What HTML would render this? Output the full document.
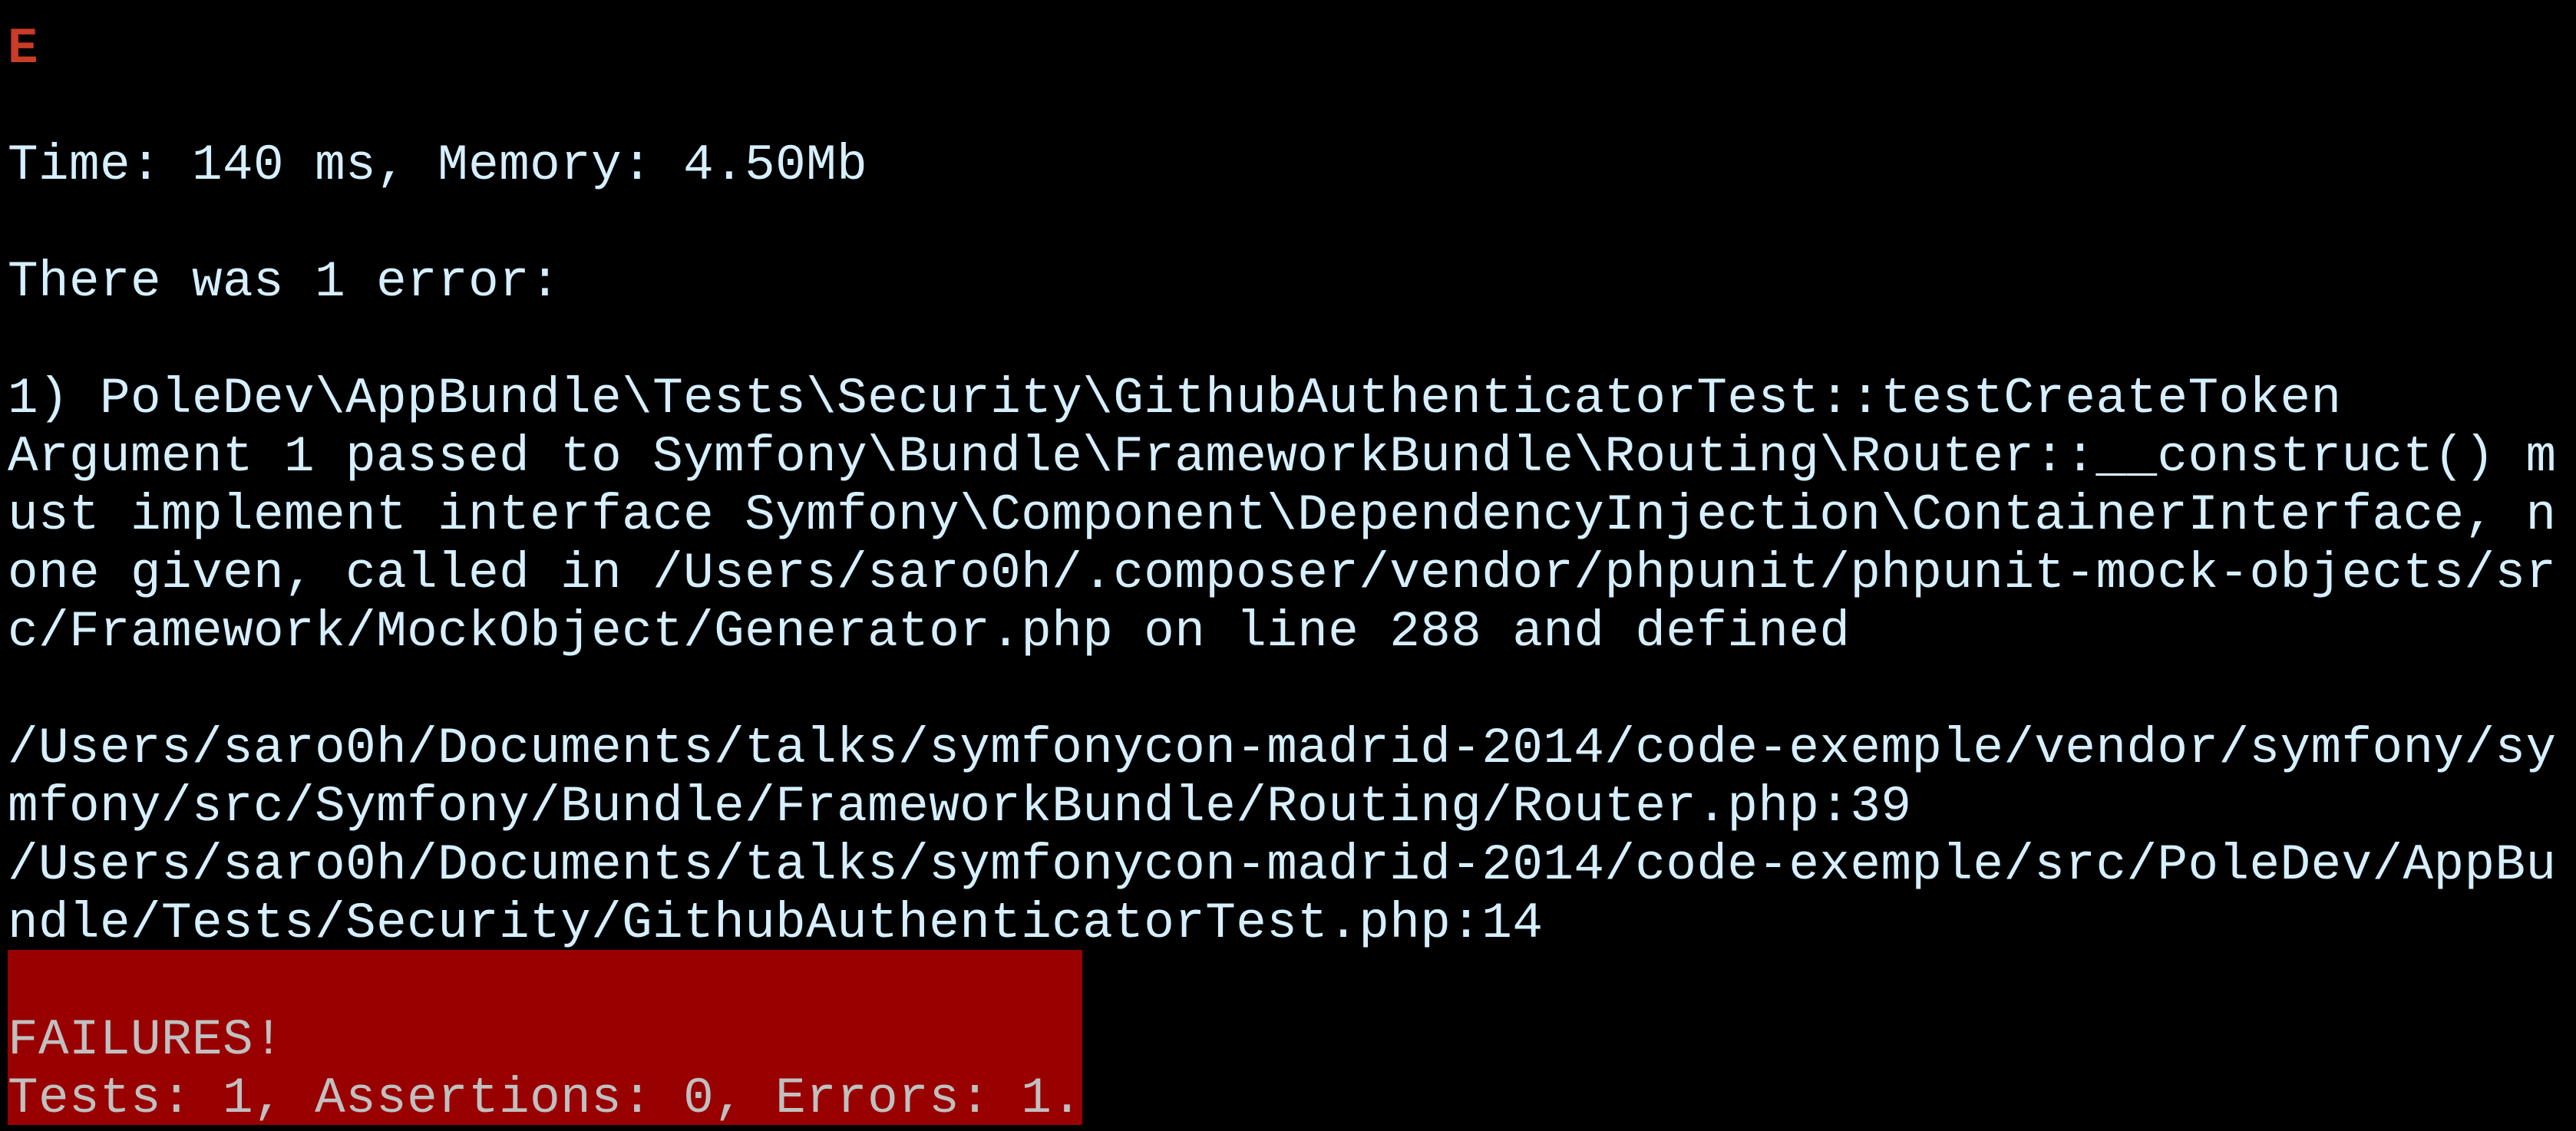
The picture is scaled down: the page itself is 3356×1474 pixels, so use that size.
<!DOCTYPE html>
<html><head><meta charset="utf-8"><style>
html,body{margin:0;padding:0;background:#000;width:3356px;height:1474px;overflow:hidden}
pre{margin:0;position:absolute;left:10px;top:26px;font-family:"Liberation Mono","DejaVu Sans Mono",monospace;font-size:66px;line-height:76px;letter-spacing:0.4px;color:#d6efff;white-space:pre}
.e{color:#c83c28;font-weight:bold}
.box{position:absolute;left:10px;top:1238px;width:1400px;height:228px;background:#990000}
.f{color:#c0c0c0}
</style></head><body>
<div class="box"></div>
<pre><span class="e">E</span>

Time: 140 ms, Memory: 4.50Mb

There was 1 error:

1) PoleDev\AppBundle\Tests\Security\GithubAuthenticatorTest::testCreateToken
Argument 1 passed to Symfony\Bundle\FrameworkBundle\Routing\Router::__construct() m
ust implement interface Symfony\Component\DependencyInjection\ContainerInterface, n
one given, called in /Users/saro0h/.composer/vendor/phpunit/phpunit-mock-objects/sr
c/Framework/MockObject/Generator.php on line 288 and defined

/Users/saro0h/Documents/talks/symfonycon-madrid-2014/code-exemple/vendor/symfony/sy
mfony/src/Symfony/Bundle/FrameworkBundle/Routing/Router.php:39
/Users/saro0h/Documents/talks/symfonycon-madrid-2014/code-exemple/src/PoleDev/AppBu
ndle/Tests/Security/GithubAuthenticatorTest.php:14

<span class="f">FAILURES!</span>
<span class="f">Tests: 1, Assertions: 0, Errors: 1.</span></pre>
</body></html>
